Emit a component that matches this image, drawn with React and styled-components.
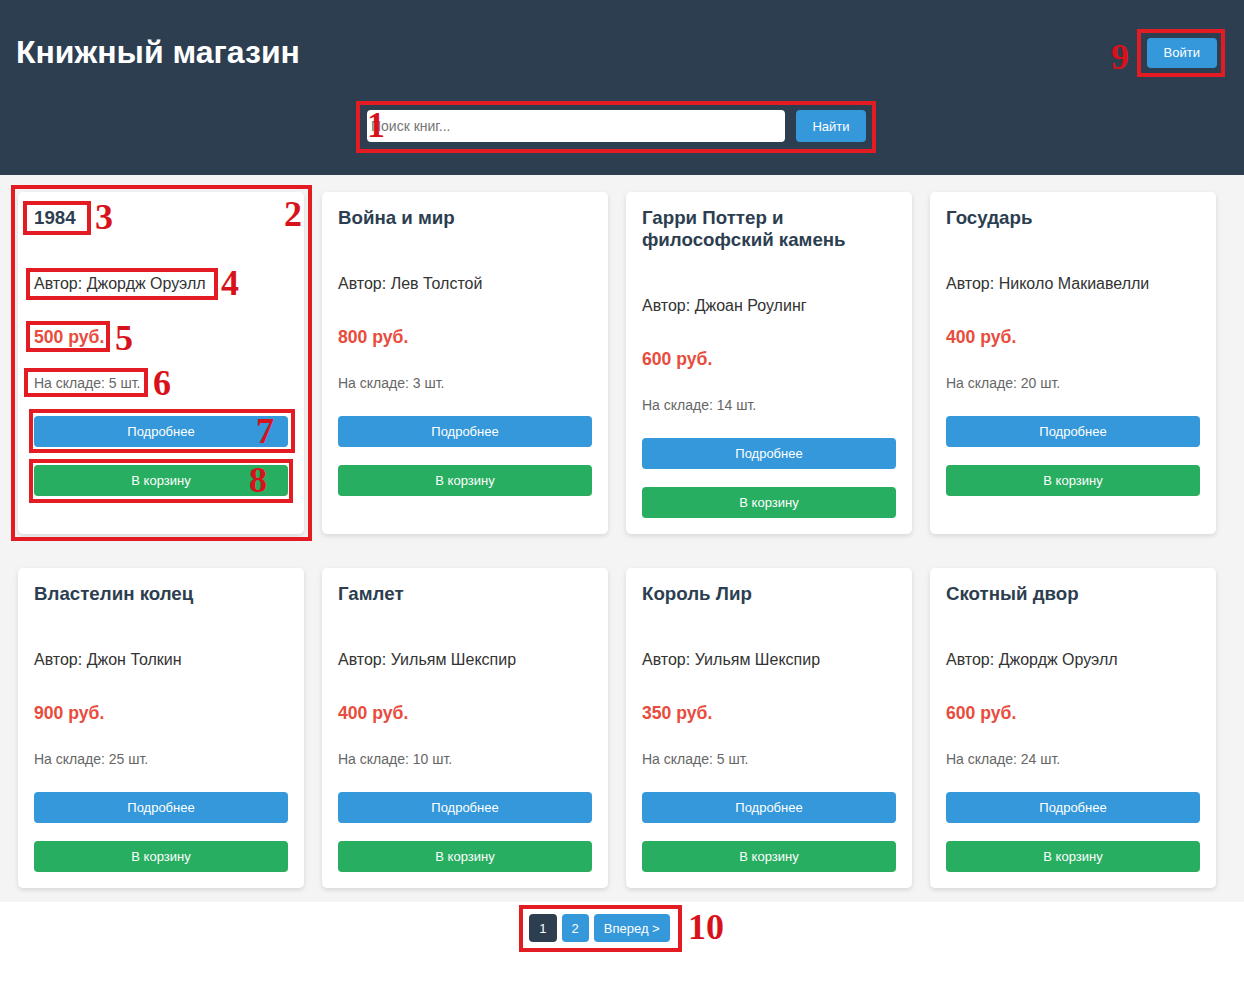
import React from "react";
import styled, { createGlobalStyle } from "styled-components";

const GlobalStyle = createGlobalStyle`
  body {
    margin: 0;
    background: #fff;
    font-family: "Liberation Sans", Arial, sans-serif;
  }
  * {
    box-sizing: border-box;
  }
`;

const Page = styled.div`
  position: relative;
  min-height: 984px;
`;

const Header = styled.header`
  background: #2c3e50;
  height: 175px;
  padding: 34px 27px 0 16px;
`;

const TopRow = styled.div`
  display: flex;
  justify-content: space-between;
  align-items: center;
  height: 37px;
`;

const Logo = styled.h1`
  margin: 0;
  color: #fff;
  font-size: 32px;
  font-weight: bold;
  line-height: 37px;
`;

const Button = styled.button`
  border: none;
  border-radius: 4px;
  color: #fff;
  font-family: "Liberation Sans", Arial, sans-serif;
  font-size: 13px;
  cursor: pointer;
  background: ${({ $variant }) =>
    $variant === "green" ? "#27ae60" : $variant === "dark" ? "#2c3e50" : "#3498db"};
`;

const LoginButton = styled(Button)`
  height: 30px;
  padding: 0 17px;
`;

const SearchForm = styled.form`
  display: flex;
  justify-content: center;
  gap: 11px;
  margin-top: 39px;
`;

const SearchInput = styled.input`
  width: 418px;
  height: 32px;
  border: none;
  border-radius: 4px;
  padding: 0 4px;
  font-size: 14px;
  font-family: "Liberation Sans", Arial, sans-serif;
  &::placeholder {
    color: #757575;
  }
`;

const SearchButton = styled(Button)`
  width: 70px;
  height: 32px;
`;

const Main = styled.main`
  background: #f4f4f4;
  padding: 17px 10px 14px 0;
`;

const Grid = styled.div`
  display: grid;
  grid-template-columns: repeat(4, 286px);
  column-gap: 18px;
  row-gap: 34px;
  justify-content: center;
`;

const Card = styled.div`
  display: flex;
  flex-direction: column;
  background: #fff;
  border-radius: 5px;
  box-shadow: 0 2px 5px rgba(0, 0, 0, 0.12);
  padding: 15px 16px 16px;
`;

const Title = styled.h3`
  margin: 0 0 46px;
  font-size: 18.72px;
  font-weight: bold;
  color: #2c3e50;
`;

const Author = styled.p`
  margin: 0 0 34px;
  font-size: 16px;
  color: #333;
`;

const Price = styled.p`
  margin: 0 0 27px;
  font-size: 17.6px;
  font-weight: bold;
  color: #e74c3c;
`;

const Stock = styled.p`
  margin: 0 0 25px;
  font-size: 14px;
  color: #666;
`;

const CardButton = styled(Button)`
  width: 100%;
  height: 31px;
  & + & {
    margin-top: 18px;
  }
`;

const Pagination = styled.nav`
  display: flex;
  justify-content: center;
  gap: 5px;
  padding: 12px 45px 0 0;
`;

const PageButton = styled(Button)`
  height: 28px;
  padding: 0 10px;
  min-width: 27px;
`;

const Box = styled.div`
  position: absolute;
  left: ${({ $x }) => $x}px;
  top: ${({ $y }) => $y}px;
  width: ${({ $w }) => $w}px;
  height: ${({ $h }) => $h}px;
  border: 4px solid #e31b23;
  pointer-events: none;
`;

const Mark = styled.span`
  position: absolute;
  left: ${({ $x }) => $x}px;
  top: ${({ $y }) => $y}px;
  font-family: "Liberation Serif", "Times New Roman", serif;
  font-weight: bold;
  font-size: 36px;
  line-height: 1;
  color: #d8121b;
  pointer-events: none;
`;

const books = [
  { title: "1984", author: "Джордж Оруэлл", price: 500, stock: 5 },
  { title: "Война и мир", author: "Лев Толстой", price: 800, stock: 3 },
  { title: "Гарри Поттер и философский камень", author: "Джоан Роулинг", price: 600, stock: 14 },
  { title: "Государь", author: "Николо Макиавелли", price: 400, stock: 20 },
  { title: "Властелин колец", author: "Джон Толкин", price: 900, stock: 25 },
  { title: "Гамлет", author: "Уильям Шекспир", price: 400, stock: 10 },
  { title: "Король Лир", author: "Уильям Шекспир", price: 350, stock: 5 },
  { title: "Скотный двор", author: "Джордж Оруэлл", price: 600, stock: 24 },
];

const boxes = [
  { n: "1", x: 356, y: 101, w: 520, h: 52, mx: 367, my: 107 },
  { n: "2", x: 11, y: 185, w: 301, h: 356, mx: 284, my: 196 },
  { n: "3", x: 23, y: 201, w: 68, h: 34, mx: 95, my: 199 },
  { n: "4", x: 26, y: 268, w: 192, h: 32, mx: 221, my: 265 },
  { n: "5", x: 26, y: 321, w: 84, h: 31, mx: 115, my: 320 },
  { n: "6", x: 24, y: 368, w: 124, h: 29, mx: 153, my: 365 },
  { n: "7", x: 29, y: 409, w: 266, h: 44, mx: 256, my: 413 },
  { n: "8", x: 29, y: 459, w: 264, h: 44, mx: 249, my: 462 },
  { n: "9", x: 1137, y: 29, w: 88, h: 48, mx: 1111, my: 39 },
  { n: "10", x: 519, y: 905, w: 163, h: 47, mx: 688, my: 909 },
];

function BookCard({ title, author, price, stock }) {
  return (
    <Card>
      <Title>{title}</Title>
      <Author>Автор: {author}</Author>
      <Price>{price} руб.</Price>
      <Stock>На складе: {stock} шт.</Stock>
      <CardButton>Подробнее</CardButton>
      <CardButton $variant="green">В корзину</CardButton>
    </Card>
  );
}

export default function App() {
  return (
    <Page>
      <GlobalStyle />
      <Header>
        <TopRow>
          <Logo>Книжный магазин</Logo>
          <LoginButton>Войти</LoginButton>
        </TopRow>
        <SearchForm onSubmit={(e) => e.preventDefault()}>
          <SearchInput placeholder="Поиск книг..." />
          <SearchButton type="submit">Найти</SearchButton>
        </SearchForm>
      </Header>
      <Main>
        <Grid>
          {books.map((b) => (
            <BookCard key={b.title} {...b} />
          ))}
        </Grid>
      </Main>
      <Pagination>
        <PageButton $variant="dark">1</PageButton>
        <PageButton>2</PageButton>
        <PageButton>Вперед &gt;</PageButton>
      </Pagination>
      {boxes.map((b) => (
        <React.Fragment key={b.n}>
          <Box $x={b.x} $y={b.y} $w={b.w} $h={b.h} />
          <Mark $x={b.mx} $y={b.my}>{b.n}</Mark>
        </React.Fragment>
      ))}
    </Page>
  );
}
